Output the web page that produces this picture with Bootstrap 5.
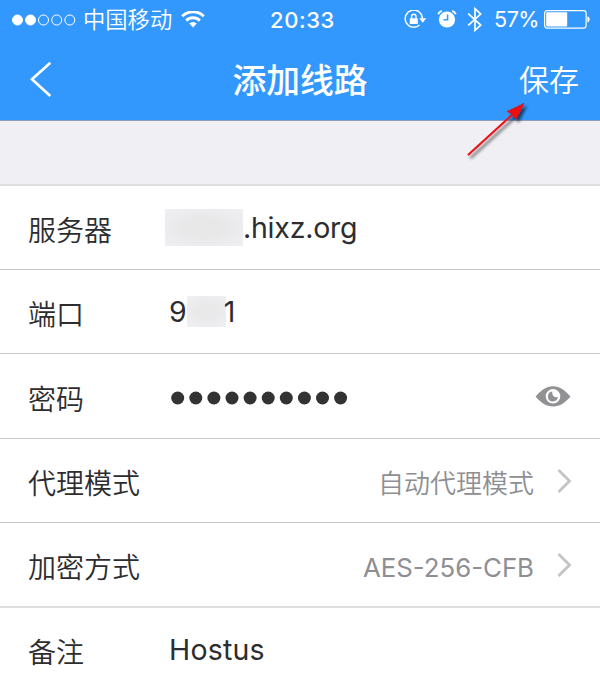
<!DOCTYPE html>
<html lang="zh-CN">
<head>
<meta charset="utf-8">
<meta name="viewport" content="width=device-width, initial-scale=1">
<title>添加线路</title>
<link href="https://cdn.jsdelivr.net/npm/bootstrap@5.3.0/dist/css/bootstrap.min.css" rel="stylesheet">
<style>
body{font-family:Inter,"Noto Sans CJK SC",sans-serif;width:600px;height:690px;overflow:hidden;background:#fff;color:#2d2d2f;line-height:1}
svg{display:block;flex:none}
.topbar{background:#3398fe;height:121px;border-bottom:1px solid #8d9fbd}
.status{height:40px;padding-left:12px;padding-right:10px}
.status-left{width:258px}
.carrier{font-size:22.3px;font-weight:350;margin-left:7px;margin-right:9px}
.clock{font-size:22px;font-weight:500;letter-spacing:.6px}
.bt{margin-left:10px}
.alarm{margin-left:10px}
.pct{font-size:21.6px;font-weight:400;width:44px;margin-left:11px;margin-right:6px;letter-spacing:-.5px}
.titlebar{height:80px;padding:0 21px 0 30px}
.titlebar h1{font-size:33.8px;font-weight:500;line-height:1;padding-top:1px}
.side{width:70px}
.side-back{width:61px}
.save{font-size:30px;font-weight:350;color:#fff;text-decoration:none;white-space:nowrap}
.spacer{height:63px;background:#efeff4}
.line{height:84px;border-top:1px solid #c8c7cc;padding:0 28px;font-size:28px}
.line-tall{height:85px}
.line-soft{border-top:2px solid #dededf}
.name{width:141px;font-weight:350;padding-top:7px}
.val{font-size:28.5px;padding-top:2px}
.host{letter-spacing:-.22px}
.port-end{margin-left:-2px}
.note{letter-spacing:.2px}
.mask-host{width:78px;height:37px;margin-left:-4px;margin-top:-2px;background:radial-gradient(#e8e8e9 35%,#f0f0f4)}
.mask-port{width:39px;height:31px;margin-top:-2px;background:radial-gradient(#e9e9ea 30%,#f0f0f4)}
.choice{color:#8e8e93;font-size:26px;font-weight:350;padding-top:6px;margin-right:23px}
.cipher{font-weight:400;font-size:25.8px}
.pointer{position:absolute;left:455px;top:90px}
</style>
</head>
<body>
<header class="topbar text-white position-relative">
  <div class="status d-flex align-items-center">
    <div class="status-left d-flex align-items-center">
      <svg width="64" height="12" viewBox="0 0 64 12" fill="#fff" stroke="#fff"><circle cx="5.5" cy="6" r="5"/><circle cx="18.5" cy="6" r="5"/><g fill="none"><circle cx="31.5" cy="6" r="5"/><circle cx="44.7" cy="6" r="5"/><circle cx="57.8" cy="6" r="5"/></g></svg>
      <span class="carrier">中国移动</span>
      <svg width="24" height="18" viewBox="0 0 24 18" fill="none" stroke="#fff" stroke-width="2.9"><path d="M1.2 5.200a15.600 15.600 0 0 1 21.600 0M5.200 9.600a9.700 9.700 0 0 1 13.600 0"/><path d="M8.200 12.500a5.400 5.400 0 0 1 7.600 0L12 16.400z" fill="#fff" stroke="none"/></svg>
    </div>
    <span class="clock">20:33</span>
    <div class="d-flex align-items-center ms-auto">
      <svg width="23" height="20" viewBox="0 0 23 20" fill="none" stroke="#fff" stroke-width="1.4"><path d="M15.600 15A8.600 8.600 0 1 1 18.400 8.800"/><path d="M15.200 8.300h7l-3.500 4.400z" fill="#fff" stroke="none"/><rect x="5.800" y="8.300" width="8" height="5.800" rx=".6" fill="#fff" stroke="none"/><path d="M7.600 8.700V6.500a2.200 2.200 0 0 1 4.400 0v2.200"/></svg>
      <svg class="alarm" width="20" height="20" viewBox="0 0 20 20"><circle cx="10" cy="9.500" r="8.100" fill="#fff"/><path d="M10.600 4.500v5.300H6.600" fill="none" stroke="#3398fe" stroke-width="1.500"/><path d="M1.300 4.300A5 5 0 0 1 4.800 .9M18.700 4.300a5 5 0 0 0-3.500-3.400" fill="none" stroke="#fff" stroke-width="1.900"/></svg>
      <svg class="bt" width="16" height="26" viewBox="0 0 16 26" fill="none" stroke="#fff" stroke-width="1.700"><path d="M1.200 6.700l12.500 11.300L8 23.300V1.700l5.700 5.400L1.200 18.300"/></svg>
      <span class="pct">57%</span>
      <svg width="46" height="20" viewBox="0 0 46 20" fill="#fff"><rect x=".6" y=".6" width="41.500" height="17.500" rx="2.500" fill="none" stroke="#fff" stroke-width="1.200"/><rect x="2.200" y="2.200" width="21" height="14.300" rx="1"/><path d="M43.400 6.200c3 .7 3 5.600 0 6.300z"/></svg>
    </div>
  </div>
  <nav class="titlebar d-flex align-items-center justify-content-between">
    <a class="side-back" href="#" aria-label="返回"><svg width="22" height="36" viewBox="0 0 22 36" fill="none" stroke="#fff" stroke-width="2.700"><path d="M20.300 .8L2 17.300l18.300 16.700"/></svg></a>
    <h1 class="m-0">添加线路</h1>
    <div class="side text-end"><a class="save" href="#">保存</a></div>
  </nav>
  <svg class="pointer" width="85" height="75" viewBox="0 0 85 75"><defs><filter id="shade" x="-30%" y="-30%" width="160%" height="160%"><feDropShadow dx="2.500" dy="3" stdDeviation="1.700" flood-color="#000" flood-opacity=".6"/></filter></defs><g filter="url(#shade)"><path d="M13.600 64.500L58 24" stroke="#e8131a" stroke-width="2.200" stroke-linecap="round"/><path d="M69 13.500L52.200 21.500l4.300 1.900 1.800 1.800 2.700 4z" fill="#f00b10" stroke="#d4161a" stroke-width=".9"/></g></svg>
</header>
<div class="spacer"></div>
<main>
  <div class="line line-tall line-soft d-flex align-items-center"><div class="name">服务器</div><div class="val d-flex align-items-center"><span class="mask-host"></span><span class="host">.hixz.org</span></div></div>
  <div class="line d-flex align-items-center"><div class="name">端口</div><div class="val d-flex align-items-center"><span>9</span><span class="mask-port"></span><span class="port-end">1</span></div></div>
  <div class="line line-tall d-flex align-items-center"><div class="name">密码</div>
    <svg class="mt-1" width="182" height="14" viewBox="0 0 182 14" fill="#333" role="img" aria-label="密码"><circle cx="8.700" cy="7" r="6.500"/><circle cx="26.800" cy="7" r="6.500"/><circle cx="44.900" cy="7" r="6.500"/><circle cx="63" cy="7" r="6.500"/><circle cx="81.100" cy="7" r="6.500"/><circle cx="99.200" cy="7" r="6.500"/><circle cx="117.300" cy="7" r="6.500"/><circle cx="135.400" cy="7" r="6.500"/><circle cx="153.500" cy="7" r="6.500"/><circle cx="171.600" cy="7" r="6.500"/></svg>
    <svg class="ms-auto" width="37" height="22" viewBox="0 0 37 22"><path d="M.6 11.500C5.500 5.500 11 1.200 18 1.200S30.500 5.500 35.400 11.500C30.500 17.500 25 21.500 18 21.500S5.500 17.500 .6 11.500z" fill="#929295"/><circle cx="18" cy="11.300" r="6.300" fill="#fff" stroke="#fff" stroke-width="2"/><path d="M17.300 6.500a5 5 0 1 0 5.600 5.600c-1.500.5-3 .2-4-.6-1.300-1-1.900-3-1.600-5z" fill="#929295"/></svg>
  </div>
  <div class="line d-flex align-items-center"><div class="name">代理模式</div><span class="choice ms-auto">自动代理模式</span><svg width="15" height="26" viewBox="0 0 15 26" fill="none" stroke="#c4c4c8" stroke-width="2.800"><path d="M1.500 2L12.500 13 1.500 24"/></svg></div>
  <div class="line d-flex align-items-center"><div class="name">加密方式</div><span class="choice cipher ms-auto">AES-256-CFB</span><svg width="15" height="26" viewBox="0 0 15 26" fill="none" stroke="#c4c4c8" stroke-width="2.800"><path d="M1.500 2L12.500 13 1.500 24"/></svg></div>
  <div class="line line-soft d-flex align-items-center"><div class="name">备注</div><div class="val note">Hostus</div></div>
</main>
<script src="https://cdn.jsdelivr.net/npm/bootstrap@5.3.0/dist/js/bootstrap.bundle.min.js"></script>
</body>
</html>
